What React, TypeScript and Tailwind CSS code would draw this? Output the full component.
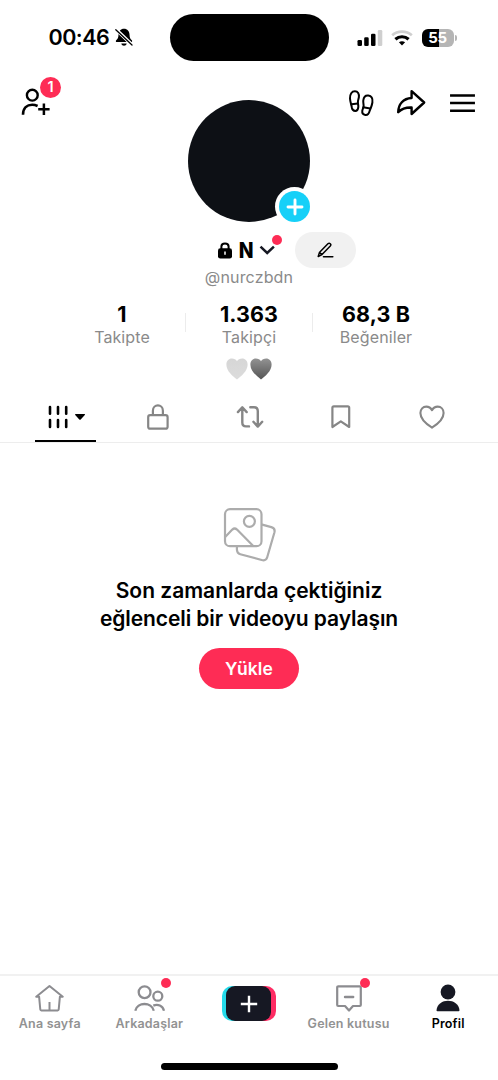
import type { ReactNode } from "react";

type BoxProps = { w: number; h: number; className?: string; children: ReactNode };

function Icon({ w, h, className = "", children }: BoxProps) {
  return (
    <svg
      width={w}
      height={h}
      viewBox={`0 0 ${w} ${h}`}
      fill="none"
      stroke="currentColor"
      strokeWidth={2}
      strokeLinecap="round"
      strokeLinejoin="round"
      className={`block shrink-0 overflow-visible ${className}`}
    >
      {children}
    </svg>
  );
}

function StatusBar() {
  return (
    <div className="flex h-[76px] items-start pt-[14px]">
      <div className="flex h-[47px] w-[170px] items-center pl-[48.5px]">
        <span className="w-[61px] whitespace-nowrap text-[21.5px] leading-none font-semibold tracking-[-0.5px]">00:46</span>
        <Icon w={18} h={19} className="ml-[5px]">
          <path d="M9 0.8C5.6 0.8 3.6 3.4 3.5 6.4C3.4 9.8 2.6 10.8 1.2 12.2C0.5 13 0.8 14 1.9 14H16.1C17.2 14 17.5 13 16.8 12.2C15.4 10.8 14.6 9.8 14.5 6.4C14.4 3.4 12.4 0.8 9 0.8Z" fill="currentColor" stroke="none" />
          <path d="M6.3 15.6H11.7C11.2 18.6 6.8 18.6 6.3 15.6Z" fill="currentColor" stroke="none" />
          <path d="M0.3 0.8L17.5 17.2" stroke="#fff" strokeWidth={3.4} />
          <path d="M0.8 1.8L17 17" strokeWidth={1.3} />
        </Icon>
      </div>
      <div className="h-[47px] w-[158.5px] rounded-full bg-black" />
      <div className="flex h-[47px] items-center pl-[28px]">
        <Icon w={26} h={16}>
          <g stroke="none" fill="currentColor">
            <rect x="0.5" y="10" width="4.5" height="6" rx="1.3" />
            <rect x="7.2" y="7.3" width="4.5" height="8.7" rx="1.3" />
            <rect x="14" y="3.8" width="4.5" height="12.2" rx="1.3" />
            <rect x="20.8" y="0" width="4.5" height="16" rx="1.3" fill="#cfcfcf" />
          </g>
        </Icon>
        <Icon w={22} h={16} className="ml-[8px]">
          <path d="M1.2 5.2C6.6 .4 15.4 .4 20.8 5.2" stroke="#cfcfcf" strokeWidth={2.8} strokeLinecap="butt" />
          <path d="M4.4 9.2C8.2 5.9 13.8 5.9 17.6 9.2" strokeWidth={3.2} strokeLinecap="butt" />
          <path d="M7.9 12.3C9.7 10.8 12.3 10.8 14.1 12.3L11 15.6Z" fill="currentColor" stroke="none" />
        </Icon>
        <div className="ml-[9px] flex h-[18px] w-[32px] items-center justify-center rounded-[6px] bg-[linear-gradient(90deg,#000_54%,#b5b5b5_54%)] text-[15px] leading-none font-bold tracking-[-0.3px] text-white">
          55
        </div>
        <div className="ml-[1px] h-[6px] w-[2px] rounded-r-full bg-[#b5b5b5]" />
      </div>
    </div>
  );
}

function ProfileHeader() {
  return (
    <header className="grid h-[156px] grid-cols-[188px_122px_1fr] items-start">
      <div className="relative pt-[12px] pl-[21px]">
        <Icon w={30} h={28} className="">
          <circle cx="11.3" cy="7.2" r="5.4" strokeWidth={2.4} />
          <path d="M2 26.8C2 20 6 16.8 11.2 16.8C13.2 16.8 14.8 17.2 16.6 18" strokeWidth={2.6} strokeLinecap="butt" />
          <path d="M17.2 21.3H28.6M22.9 15.6V27" strokeWidth={2.5} strokeLinecap="butt" />
        </Icon>
        <span className="absolute top-[1px] left-[40px] flex size-[21px] items-center justify-center rounded-full bg-[#fe2c55] text-[14.5px] leading-none font-semibold text-white">1</span>
      </div>
      <div className="relative mt-[24px] size-[122px] rounded-full bg-[#0d1015]">
        <span className="absolute top-[87px] left-[87px] flex size-[39px] items-center justify-center rounded-full bg-white">
          <span className="flex size-[31px] items-center justify-center rounded-full bg-[#16d0f8] text-white">
            <Icon w={16} h={16}>
              <path d="M8 1V15M1 8H15" strokeWidth={2.9} />
            </Icon>
          </span>
        </span>
      </div>
      <div className="flex items-center pt-[13px] pl-[39px]">
        <Icon w={25} h={27}>
          <g strokeWidth={2}>
            <path d="M5.9 1.3C9 1.3 10.2 3.8 9.9 7C9.6 9.3 8.7 10.6 8.9 13C9.1 14.7 9.5 15.8 9.3 17.2C9.1 19.7 8.1 21 6.3 21C4.3 21 3.1 19.6 2.8 17.4C2.6 15.2 1.2 12.4 1 8.5C.8 4 2.8 1.3 5.9 1.3Z" />
            <path d="M2.6 14.3L8.9 13.6" />
            <path d="M19.3 5.5C22.4 5.8 24 8.5 23.4 12.5C22.8 16.3 21.3 18.8 20.6 21C19.9 23.8 18.4 25.3 16.3 25C14.2 24.7 13 23 13.3 20.7C13.6 19.2 14.5 17.8 14.6 16.5C14.8 14.3 14 12.6 14.3 10.4C14.7 7.2 16.5 5.2 19.3 5.5Z" />
            <path d="M14.2 17.3L21.2 18.5" />
          </g>
        </Icon>
        <Icon w={30} h={28} className="ml-[22px]">
          <path d="M15.6 2.2L28.2 13.5L15.6 25V18.5C9.5 18.2 5.5 20 2.2 23.2C2.4 15.2 7.2 9.5 15.6 9Z" strokeWidth={2.4} />
        </Icon>
        <Icon w={25} h={19} className="ml-[24px]">
          <path d="M1.3 1.5H23.7M1.3 9.1H23.7M1.3 16.8H23.7" strokeWidth={2.5} strokeLinecap="square" />
        </Icon>
      </div>
    </header>
  );
}

function Stat({ value, label }: { value: string; label: string }) {
  return (
    <div className="flex w-[126px] flex-col items-center whitespace-nowrap">
      <span className="text-[21.5px] leading-[24px] font-bold tracking-[0.1px]">{value}</span>
      <span className="text-[16px] leading-[22px] tracking-[0.1px] text-[#8a8a8a]">{label}</span>
    </div>
  );
}

function Heart({ id, top, bottom }: { id: string; top: string; bottom: string }) {
  return (
    <Icon w={22} h={22}>
      <defs>
        <linearGradient id={id} x1="0" y1="0" x2="0" y2="1">
          <stop offset="0" stopColor={top} />
          <stop offset="1" stopColor={bottom} />
        </linearGradient>
      </defs>
      <path d="M11 21.4C7 18.3 .4 13.2 .4 6.7C.4 3 2.8 .6 5.8 .6C8.2 .6 10 1.6 11 3.2C12 1.6 13.8 .6 16.2 .6C19.2 .6 21.6 3 21.6 6.7C21.6 13.2 15 18.3 11 21.4Z" fill={`url(#${id})`} stroke="none" />
    </Icon>
  );
}

function Identity() {
  return (
    <section>
      <div className="flex h-[36px] items-center pl-[218px]">
        <Icon w={14} h={17}>
          <rect x="0" y="6.3" width="14" height="10.2" rx="2.3" fill="currentColor" stroke="none" />
          <path d="M3.4 7V4.4C3.4 .4 10.6 .4 10.6 4.4V7" strokeWidth={2} />
          <path d="M7 9.6V12.8" stroke="#fff" strokeWidth={1.5} strokeLinecap="butt" />
        </Icon>
        <span className="ml-[6px] flex w-[17px] justify-center pt-[1px] text-[21.5px] leading-none font-extrabold"><span className="inline-block scale-x-90">N</span></span>
        <div className="relative ml-[5px]">
          <Icon w={15} h={10}>
            <path d="M0.5 1.7L7.2 8L13.9 1.7" stroke="#161823" strokeWidth={2.5} strokeLinecap="butt" strokeLinejoin="miter" />
          </Icon>
          <span className="absolute top-[-10px] left-[12px] size-[10px] rounded-full bg-[#fe2c55]" />
        </div>
        <button className="ml-[19.5px] flex h-[36px] w-[61px] items-center justify-center rounded-full bg-[#f1f1f1]">
          <Icon w={17} h={16}>
            <path d="M1.2 14.5L2.4 10.6L10.9 1.8C12.5 .3 14.8 2.3 13.3 4L5 12.6L1.2 14.5ZM2.6 10.5L5 12.6" strokeWidth={1.5} />
            <path d="M6.5 14.7H15.8" strokeWidth={1.6} />
          </Icon>
        </button>
      </div>
      <p className="h-[34px] text-center text-[16px] leading-[18px] tracking-[0.15px] text-[#8a8a8a]">@nurczbdn</p>
      <div className="flex h-[56px] items-start justify-center">
        <Stat value="1" label="Takipte" />
        <span className="mt-[11px] h-[19px] w-px bg-[#ececec]" />
        <Stat value="1.363" label="Takipçi" />
        <span className="mt-[11px] h-[19px] w-px bg-[#ececec]" />
        <Stat value="68,3 B" label="Beğeniler" />
      </div>
      <div className="flex h-[34px] justify-center gap-[2px]">
        <Heart id="heart-light" top="#d6d6d6" bottom="#dcdcdc" />
        <Heart id="heart-dark" top="#929292" bottom="#555555" />
      </div>
    </section>
  );
}

function Tabs() {
  return (
    <div className="flex h-[51px] items-start border-b border-[#ededed] px-[20px] text-[#868686]">
      <div className="flex h-[50px] flex-1 flex-col items-center text-black">
        <div className="flex h-[48px] items-center gap-[7px] pt-[1.5px] pl-[1.5px]">
          <Icon w={20} h={24}>
            <path d="M2 2V8.8M10 2V8.8M18.2 2V8.8M2 15V22M10 15V22M18.2 15V22" strokeWidth={2.6} />
          </Icon>
          <Icon w={10} h={6}>
            <path d="M0 .7Q0 0 .8 0H9.4Q10.6 0 9.8 .9L5.7 5.4Q5 6.2 4.3 5.4L.2 1Z" fill="currentColor" stroke="none" />
          </Icon>
        </div>
        <span className="h-[2.5px] w-[61px] shrink-0 bg-black" />
      </div>
      <div className="flex h-[49px] flex-1 items-center justify-center pl-[1px]">
        <Icon w={22} h={26}>
          <rect x="1.2" y="11.2" width="19.4" height="13.5" rx="2" strokeWidth={2.2} />
          <path d="M5.9 11V6.7C5.9-.3 15.9-.3 15.9 6.7V11" strokeWidth={2.2} />
        </Icon>
      </div>
      <div className="flex h-[49px] flex-1 items-center justify-center">
        <Icon w={28} h={24}>
          <path d="M6.3 2.7V17.5Q6.3 21.4 10 21.4H13M1.9 7.1L6.3 2.3L10.7 7.1M14.3 2.3H18Q21.8 2.3 21.8 6.3V21.3M17.4 16.8L21.8 21.6L26.2 16.8" strokeWidth={2.4} />
        </Icon>
      </div>
      <div className="flex h-[49px] flex-1 items-center justify-center">
        <Icon w={20} h={24}>
          <path d="M1.4 2.7Q1.4 1.3 2.8 1.3H16.8Q18.2 1.3 18.2 2.7V22L9.8 16.4L1.4 22Z" strokeWidth={2.2} />
        </Icon>
      </div>
      <div className="flex h-[49px] flex-1 items-center justify-center">
        <Icon w={26} h={24}>
          <path d="M13 22.6C10.5 21 1.4 15.5 1.4 8C1.4 4.2 4 1.6 7.3 1.6C9.8 1.6 11.8 3 13 5.2C14.2 3 16.2 1.6 18.7 1.6C22 1.6 24.6 4.2 24.6 8C24.6 15.5 15.5 21 13 22.6Z" strokeWidth={2.1} />
        </Icon>
      </div>
    </div>
  );
}

function EmptyState() {
  return (
    <main className="flex flex-1 flex-col items-center pt-[64px]">
      <Icon w={54} h={55} className="ml-[1.5px] text-[#acacac]">
        <rect x="2" y="2.2" width="36.5" height="37" rx="5" strokeWidth={2.2} />
        <circle cx="26.4" cy="14.3" r="5.5" strokeWidth={2.2} />
        <path d="M2.4 29.8L9.3 22.6Q11.6 20.4 14 22.6L30 38.8" strokeWidth={2.2} />
        <path d="M39.2 17.6L48.3 20.1Q52.5 21.3 51.4 25.5L44.2 50.3Q43 54.2 38.7 53L17.3 47.2Q13.2 46 14 40" strokeWidth={2.2} />
      </Icon>
      <h2 className="mt-[15px] text-center text-[21px] leading-[28px] font-semibold whitespace-nowrap">
        <span className="block">Son zamanlarda çektiğiniz</span>
        <span className="block tracking-[-0.08px]">eğlenceli bir videoyu paylaşın</span>
      </h2>
      <button className="mt-[15px] h-[41px] w-[100px] rounded-full bg-[#fe2c55] text-[17.5px] leading-none font-semibold tracking-[0.1px] text-white">Yükle</button>
    </main>
  );
}

type NavProps = { label: string; dot?: boolean; active?: boolean; children: ReactNode };

function NavItem({ label, dot, active, children }: NavProps) {
  return (
    <div className={`flex flex-1 flex-col items-center pt-[6px] ${active ? "text-[#161823]" : "text-[#8c8c90]"}`}>
      <div className="relative flex h-[31px] w-[34px] items-center justify-center">
        {children}
        {dot && <span className="absolute top-[-4.5px] left-[28.5px] size-[10px] rounded-full bg-[#fe2c55]" />}
      </div>
      <span className={`mt-[3px] text-[12.5px] leading-[16px] font-semibold whitespace-nowrap ${active ? "tracking-[0.2px] text-black" : "tracking-[0.2px] text-[#929292]"}`}>{label}</span>
    </div>
  );
}

function BottomNav() {
  return (
    <footer className="h-[106px] border-t-2 border-[#f1f1f1]">
      <nav className="flex h-[87px]">
        <NavItem label="Ana sayfa">
          <Icon w={30} h={28}>
            <path d="M1.2 12.7L14.5 2L27.8 12.7H24.9L23.7 25.5Q23.6 26.4 22.7 26.4H6.3Q5.4 26.4 5.3 25.5L4.1 12.7Z" />
            <path d="M14.5 18V26" strokeLinecap="butt" />
          </Icon>
        </NavItem>
        <NavItem label="Arkadaşlar" dot>
          <Icon w={32} h={28}>
            <g strokeWidth={2.3} strokeLinecap="butt">
              <circle cx="11.6" cy="8.2" r="5.9" />
              <circle cx="24.8" cy="12.2" r="4.5" />
              <path d="M2.3 26.8C4.1 17.7 18.8 17.7 20.8 26.8M20.3 21.6C24.8 19.6 29.7 21.6 31 26.8" />
            </g>
          </Icon>
        </NavItem>
        <div className="flex flex-1 justify-center pt-[10px]">
          <div className="flex h-[35px] w-[54px] items-center justify-center rounded-[10px] bg-[linear-gradient(90deg,#25dbea_50%,#fe2c63_50%)]">
            <div className="flex h-[35px] w-[45px] items-center justify-center rounded-[9px] bg-[#161823] text-white">
              <Icon w={18} h={18}>
                <path d="M9 .8V17.2M.8 9H17.2" strokeWidth={2.4} strokeLinecap="butt" />
              </Icon>
            </div>
          </div>
        </div>
        <NavItem label="Gelen kutusu" dot>
          <Icon w={26} h={28}>
            <path d="M2.3 2.3H23.7Q24.8 2.3 24.8 3.4V21Q24.8 22 23.8 22H17L13 26.5L9 22H2.2Q1.2 22 1.2 21V3.4Q1.2 2.3 2.3 2.3Z" strokeWidth={2.2} />
            <path d="M9 13H17.2" strokeWidth={2.4} />
          </Icon>
        </NavItem>
        <NavItem label="Profil" active>
          <Icon w={24} h={28}>
            <circle cx="12" cy="8" r="7.4" fill="currentColor" stroke="none" />
            <path d="M.5 26.2C1.7 13.5 22.3 13.5 23.5 26.2Q23.5 27.2 22.6 27.2H1.4Q.5 27.2 .5 26.2Z" fill="currentColor" stroke="none" />
          </Icon>
        </NavItem>
      </nav>
      <div className="mx-auto h-[7px] w-[177px] rounded-full bg-black" />
    </footer>
  );
}

export default function App() {
  return (
    <div className="flex h-[1080px] w-[498px] flex-col overflow-hidden bg-white font-['Inter','Noto_Sans',sans-serif] text-black">
      <StatusBar />
      <ProfileHeader />
      <Identity />
      <Tabs />
      <EmptyState />
      <BottomNav />
    </div>
  );
}
